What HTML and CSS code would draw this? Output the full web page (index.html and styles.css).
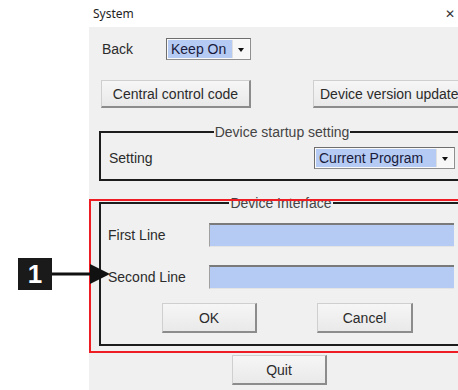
FILE: index.html
```html
<!DOCTYPE html>
<html lang="en">
<head>
    <meta charset="UTF-8">
    <title>System</title>
    <link rel="stylesheet" href="styles.css">
</head>
<body>
    <div class="screen">
        <div class="window">
            <div class="titlebar">
                <span class="title">System</span>
                <span class="close">✕</span>
            </div>
            <div class="panel">
                <div class="back-row">
                    <span class="lbl back-lbl">Back</span>
                    <div class="combo combo-back">
                        <span class="combo-value">Keep On</span>
                        <span class="combo-arrow"></span>
                    </div>
                </div>

                <div class="btn-row">
                    <button class="btn btn-central">Central control code</button>
                    <button class="btn btn-version">Device version update</button>
                </div>

                <fieldset class="group startup">
                    <legend>Device startup setting</legend>
                    <div class="setting-row">
                        <span class="lbl">Setting</span>
                        <div class="combo combo-program">
                            <span class="combo-value">Current Program</span>
                            <span class="combo-arrow"></span>
                        </div>
                    </div>
                </fieldset>

                <div class="highlight-wrap">
                    <fieldset class="group iface">
                        <legend>Device Interface</legend>
                        <div class="line-row">
                            <span class="lbl line-lbl">First Line</span>
                            <div class="line-input"></div>
                        </div>
                        <div class="line-row second">
                            <span class="lbl line-lbl">Second Line</span>
                            <div class="line-input"></div>
                        </div>
                        <div class="action-row">
                            <button class="btn btn-ok">OK</button>
                            <button class="btn btn-cancel">Cancel</button>
                        </div>
                    </fieldset>
                    <div class="highlight"></div>
                </div>

                <div class="quit-row">
                    <button class="btn btn-quit">Quit</button>
                </div>
            </div>
        </div>

        <div class="callout">
            <span class="callout-num">1</span>
            <svg class="callout-arrow" width="60" height="22" viewBox="0 0 60 22">
                <line x1="0" y1="11" x2="42" y2="11" stroke="#111" stroke-width="3"/>
                <polygon points="38,1 58,11 38,21" fill="#111"/>
            </svg>
        </div>
    </div>
</body>
</html>
```

FILE: styles.css
```css
body {
    margin: 0;
    background-color: #ffffff;
    font-family: 'Liberation Sans', Arial, sans-serif;
    font-size: 14px;
    color: #2b2b2b;
    overflow: hidden;
}

.screen {
    position: relative;
    height: 390px;
    padding-left: 89px;
}

.window {
    width: 381px;
}

.titlebar {
    height: 27px;
    display: flex;
    align-items: center;
    justify-content: space-between;
    padding: 0 15px 0 4px;
    background-color: #ffffff;
}

.title {
    font-family: 'Noto Sans', 'Open Sans', sans-serif;
    font-size: 12px;
    color: #1e1e1e;
    margin-top: -1px;
}

.close {
    font-size: 12px;
    color: #333;
}

.panel {
    background-color: #f0f0f0;
    height: 363px;
    padding-top: 11px;
    box-sizing: border-box;
}

.lbl {
    color: #2b2b2b;
    white-space: nowrap;
}

/* back row */
.back-row {
    display: flex;
    align-items: center;
    height: 22px;
    padding-left: 13px;
}

.back-lbl {
    width: 64px;
}

.combo {
    display: flex;
    height: 22px;
    box-sizing: border-box;
    border: 1px solid #8f8f8f;
    border-top-color: #6e6e6e;
    border-left-color: #6e6e6e;
    background-color: #fafafa;
    padding: 1px;
}

.combo-value {
    flex: 1;
    display: flex;
    align-items: center;
    padding-left: 3px;
    background-color: #b5cbf4;
    color: #1a1a3a;
}

.combo-arrow {
    width: 16px;
    position: relative;
    background-color: #f7f7f7;
    border-left: 1px solid #e0e0e0;
}

.combo-arrow::after {
    content: '';
    position: absolute;
    left: 5px;
    top: 8px;
    border-left: 3.5px solid transparent;
    border-right: 3.5px solid transparent;
    border-top: 4px solid #111;
}

.combo-back {
    width: 85px;
}

.combo-program {
    width: 141px;
}

/* buttons */
.btn {
    height: 28px;
    font-family: 'Liberation Sans', Arial, sans-serif;
    font-size: 14px;
    color: #2b2b2b;
    background: linear-gradient(#f6f6f6, #e9e9e9);
    border: 1px solid #cfcfcf;
    border-right: 2px solid #8c8c8c;
    border-bottom: 2px solid #8c8c8c;
    padding: 0;
    box-sizing: border-box;
}

.btn-row {
    display: flex;
    justify-content: space-between;
    margin-top: 20px;
    padding-left: 12px;
}

.btn-central {
    width: 150px;
}

.btn-version {
    width: 157px;
    padding-left: 6px;
    text-align: left;
    white-space: nowrap;
}

/* group frames */
.group {
    margin: 0 8px 0 10px;
    border: 2px solid #1c1c1c;
    min-inline-size: 0;
}

.group legend {
    margin: 0 auto;
    padding: 0 1px;
    line-height: 16px;
    color: #444444;
}

.startup {
    margin-top: 16px;
    padding: 7px 5px 10px 8px;
}

.setting-row {
    display: flex;
    align-items: center;
    justify-content: space-between;
}

/* device interface */
.highlight-wrap {
    position: relative;
    margin-top: 14px;
}

.iface {
    padding: 12px 6px 11px 7px;
}

.highlight {
    position: absolute;
    left: 0;
    right: -10px;
    top: 4px;
    bottom: -7px;
    border: 2px solid #ee1d23;
    pointer-events: none;
}

.line-row {
    display: flex;
    align-items: center;
}

.line-row.second {
    margin-top: 18px;
}

.line-lbl {
    width: 101px;
}

.line-input {
    flex: 1;
    height: 24px;
    box-sizing: border-box;
    background-color: #b5cbf4;
    border-top: 2px solid #7a7a7a;
    border-left: 1px solid #a0a0a0;
    border-bottom: 1px solid #e4e4e4;
}

.action-row {
    display: flex;
    gap: 60px;
    margin-top: 14px;
    padding-left: 54px;
}

.action-row .btn {
    height: 30px;
}

.btn-ok {
    width: 95px;
}

.btn-cancel {
    width: 96px;
}

.quit-row {
    display: flex;
    justify-content: center;
    margin-top: 9px;
}

.btn-quit {
    width: 95px;
    height: 30px;
}

/* annotation marker */
.callout {
    position: absolute;
    left: 18px;
    top: 258px;
    display: flex;
    align-items: center;
}

.callout-num {
    width: 34px;
    height: 32px;
    display: flex;
    align-items: center;
    justify-content: center;
    background-color: #1a1a1a;
    color: #ffffff;
    font-weight: bold;
    font-size: 26px;
}
```
